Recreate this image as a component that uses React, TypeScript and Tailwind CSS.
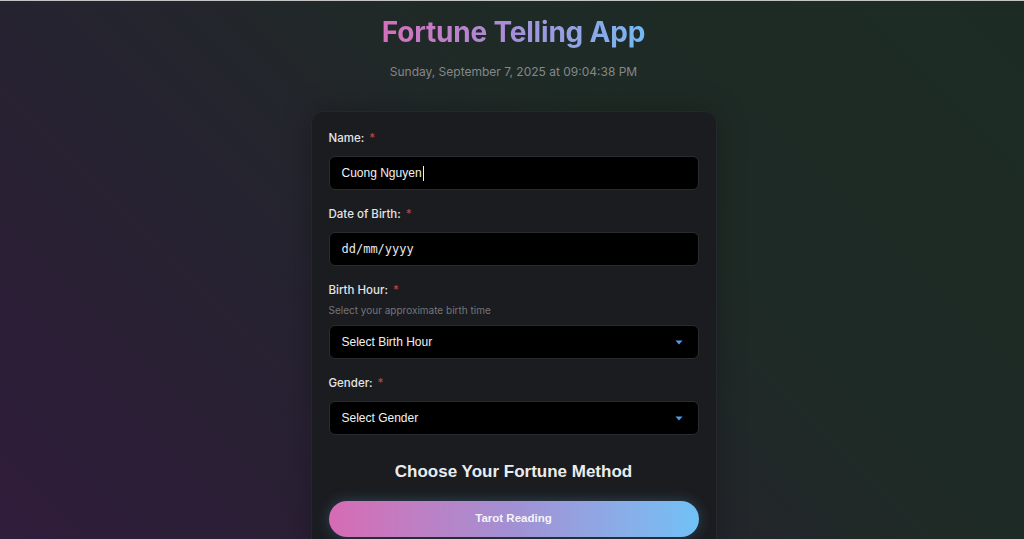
import type { ReactNode } from 'react'

const FONT = { fontFamily: 'Inter, "Liberation Sans", sans-serif' }
const SANS = { fontFamily: '"Liberation Sans", Arial, sans-serif' }

function Label({ children, className = 'mb-[10px]' }: { children: ReactNode; className?: string }) {
  return (
    <label className={`block text-[11.5px] leading-4 font-medium text-[#e4e4e6] ${className}`}>
      {children}
      <span className="ml-[5px] text-[#b3484c]">*</span>
    </label>
  )
}

function Caret() {
  return (
    <svg width="8" height="5" viewBox="0 0 8 5" className="mr-[1px]">
      <path d="M0.5 0.5 L7.5 0.5 L4 4.5 Z" fill="#4f9df2" />
    </svg>
  )
}

function Select({ text }: { text: string }) {
  return (
    <div
      className="h-[34px] rounded-md bg-black border border-[#2b2c30] flex items-center justify-between pl-3 pr-[14px] text-[12px] text-[#f2f2f2]"
      style={SANS}
    >
      <span>{text}</span>
      <Caret />
    </div>
  )
}

export default function App() {
  return (
    <div
      className="min-h-[539px] w-full border-t border-[#c4c4c4] bg-[linear-gradient(45deg,#311c3c_0%,#2b1f36_18%,#25242f_40%,#1f2a26_62%,#1c2c23_100%)]"
      style={FONT}
    >
      <div className="flex flex-col items-center pt-[13px] pl-[3px]">
        <h1 className="text-[28px] leading-9 font-bold tracking-[-0.2px] bg-gradient-to-r from-[#d46fbb] via-[#a58fd8] to-[#74b8f2] bg-clip-text text-transparent">
          Fortune Telling App
        </h1>
        <p className="mt-[13px] text-[12px] leading-[18px] text-[#85878b]">
          Sunday, September 7, 2025 at 09:04:38 PM
        </p>

        <div className="mt-[30px] w-[406px] rounded-xl border border-[#26272c] bg-[#1b1c20] px-[17px] pt-[18px] pb-6 shadow-[0_0_30px_rgba(0,0,0,0.25)]">
          <Label>Name:</Label>
          <div
            className="h-[34px] rounded-md bg-black border border-[#2b2c30] flex items-center px-3 text-[12px] text-[#f2f2f2]"
            style={SANS}
          >
            Cuong Nguyen
            <span className="ml-[1px] inline-block w-px h-[15px] bg-[#f0f0f0]" />
          </div>

          <div className="mt-4">
            <Label>Date of Birth:</Label>
            <div
              className="h-[34px] rounded-md bg-black border border-[#2b2c30] flex items-center px-3 text-[12px] text-[#e8e8e8]"
              style={{ fontFamily: '"DejaVu Sans Mono", monospace' }}
            >
              dd/mm/yyyy
            </div>
          </div>

          <div className="mt-4">
            <Label className="mb-[5px]">Birth Hour:</Label>
            <p className="mb-2 text-[10px] leading-[14px] text-[#737579]">Select your approximate birth time</p>
            <Select text="Select Birth Hour" />
          </div>

          <div className="mt-4">
            <Label>Gender:</Label>
            <Select text="Select Gender" />
          </div>

          <h2 className="mt-[25px] text-center text-[17px] leading-6 font-bold text-[#ececee]" style={SANS}>
            Choose Your Fortune Method
          </h2>

          <button
            className="mt-[17px] w-full h-9 rounded-full bg-gradient-to-r from-[#d66bb4] via-[#a190d4] to-[#6fc1f6] text-[11.5px] font-bold text-[#f4f4f8] shadow-[0_0_14px_rgba(110,193,246,0.25)]"
            style={SANS}
          >
            Tarot Reading
          </button>
        </div>
      </div>
    </div>
  )
}
